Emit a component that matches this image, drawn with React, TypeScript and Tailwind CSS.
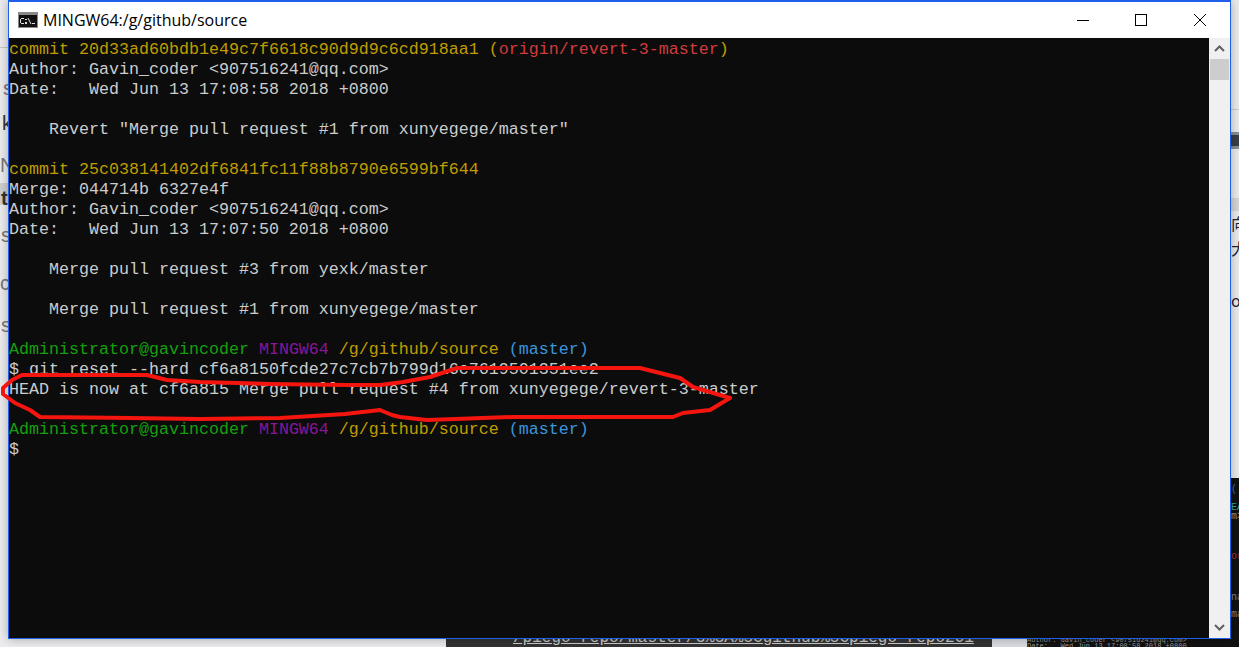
const Y = "text-[#c19c00]";
const G = "text-[#13a10e]";
const P = "text-[#881798]";
const B = "text-[#3a96dd]";
const R = "text-[#d23b3b]";

type Seg = [string, string?];

const prompt: Seg[] = [
  ["Administrator@gavincoder", G], [" "], ["MINGW64", P], [" "], ["/g/github/source", Y], [" "], ["(master)", B],
];

const LINES: Seg[][] = [
  [["commit 20d33ad60bdb1e49c7f6618c90d9d9c6cd918aa1 ", Y], ["(", Y], ["origin/revert-3-master", R], [")", Y]],
  [["Author: Gavin_coder <907516241@qq.com>"]],
  [["Date:   Wed Jun 13 17:08:58 2018 +0800"]],
  [],
  [['    Revert "Merge pull request #1 from xunyegege/master"']],
  [],
  [["commit 25c038141402df6841fc11f88b8790e6599bf644", Y]],
  [["Merge: 044714b 6327e4f"]],
  [["Author: Gavin_coder <907516241@qq.com>"]],
  [["Date:   Wed Jun 13 17:07:50 2018 +0800"]],
  [],
  [["    Merge pull request #3 from yexk/master"]],
  [],
  [["    Merge pull request #1 from xunyegege/master"]],
  [],
  prompt,
  [["$ git reset --hard cf6a8150fcde27c7cb7b799d16c7619501351ee2"]],
  [["HEAD is now at cf6a815 Merge pull request #4 from xunyegege/revert-3-master"]],
  [],
  prompt,
  [["$"]],
];

// letters of the page behind the window that stick out on either side
const LEFT_BITS = [
  { y: 76, x: 3, t: "s", c: "text-[#777]" },
  { y: 111, x: 2, t: "k", c: "text-[#333]" },
  { y: 153, x: 0, t: "N", c: "text-[#777]" },
  { y: 186, x: 1, t: "t", c: "text-[#333] font-bold" },
  { y: 223, x: 1, t: "s", c: "text-[#777]" },
  { y: 271, x: 0, t: "c", c: "text-[#777]" },
  { y: 313, x: 1, t: "s", c: "text-[#777]" },
];

const RIGHT_BITS = [
  { y: 213, t: "向" },
  { y: 238, t: "大" },
  { y: 290, t: "o" },
];

const DARK_BITS = [
  { y: 485, t: "(", c: "text-[#3a76a8]" },
  { y: 503, t: "EA", c: "text-[#3fa7a0]" },
  { y: 512, t: "m>", c: "text-[#999]" },
  { y: 552, t: "or", c: "text-[#a33]" },
  { y: 593, t: "na", c: "text-[#888]" },
  { y: 610, t: "ma", c: "text-[#888]" },
  { y: 627, t: "or", c: "text-[#a33]" },
];

function TermIcon() {
  return (
    <svg width="20" height="16" viewBox="0 0 20 16" className="shrink-0">
      <rect width="20" height="16" fill="#8a8a8a" />
      <rect x="1" y="3" width="18" height="12" fill="#111" />
      <rect x="3" y="6" width="3" height="1" fill="#ddd" />
      <rect x="2" y="7" width="1" height="4" fill="#ddd" />
      <rect x="3" y="11" width="3" height="1" fill="#ddd" />
      <rect x="7" y="7" width="2" height="1" fill="#ddd" />
      <rect x="7" y="10" width="2" height="2" fill="#ddd" />
      <path d="M10 6l3 6" stroke="#ddd" strokeWidth="1" />
      <rect x="14" y="11" width="3" height="1" fill="#ddd" />
    </svg>
  );
}

function Chevron({ down }: { down?: boolean }) {
  return (
    <svg width="11" height="7" viewBox="0 0 11 7">
      <path d={down ? "M1 1l4.5 4.5L10 1" : "M1 6l4.5-4.5L10 6"} fill="none" stroke="#606060" strokeWidth="2" />
    </svg>
  );
}

export default function App() {
  return (
    <div className="relative h-[647px] w-[1239px] overflow-hidden bg-[#ececee] font-['Liberation_Sans',sans-serif]">
      {/* page behind the terminal */}
      <div className="absolute left-0 top-0 h-[647px] w-2 overflow-hidden">
        <div className="absolute left-0 top-[47px] h-px w-2 bg-[#c8c8c8]" />
        <div className="absolute left-0 top-[183px] h-[22px] w-2 bg-[#d0d0d0]" />
        {LEFT_BITS.map((b) => (
          <div key={b.y} style={{ top: b.y, left: b.x }} className={`absolute text-[20px] leading-[24px] ${b.c}`}>{b.t}</div>
        ))}
      </div>
      <div className="absolute left-[1231px] top-[109px] h-px w-2 bg-[#ccc]" />
      <div className="absolute left-[1231px] top-[132px] flex h-[17px] w-2 items-center bg-[#8a8f94]">
        <div className="h-[11px] w-2 bg-[#3a3f48]" />
      </div>
      <div className="absolute left-[1231px] top-[198px] h-[13px] w-2 bg-[#d6d6d6]" />
      {RIGHT_BITS.map((b) => (
        <div key={b.y} style={{ top: b.y }} className="absolute left-[1231px] w-2 overflow-hidden whitespace-nowrap text-[16px] leading-[20px] text-[#223] font-['Noto_Sans_CJK_SC',sans-serif]">{b.t}</div>
      ))}
      <div className="absolute left-[1231px] top-[478px] h-[169px] w-2 overflow-hidden bg-[#111] font-['Liberation_Mono',monospace] text-[10px]">
        {DARK_BITS.map((b) => (
          <div key={b.y} style={{ top: b.y - 478 }} className={`absolute left-0 leading-[10px] ${b.c}`}>{b.t}</div>
        ))}
      </div>
      <div className="absolute left-[446px] top-[625px] h-[22px] w-[546px] overflow-hidden bg-[#333] pl-[67px]">
        <span className="whitespace-nowrap font-['Liberation_Mono',monospace] text-[16px] leading-[26px] text-[#ccc] underline">/piego_repo/master/G%3A%5Cgithub%5Cpiego_repo201</span>
      </div>
      <div className="absolute left-[992px] top-[625px] h-[22px] w-[35px] bg-[#dcdce4]" />
      <div className="absolute left-[1027px] top-[625px] h-[22px] w-[212px] overflow-hidden bg-[#111] pt-[12px] font-['Liberation_Mono',monospace] text-[7px] leading-[6px] text-[#999]">
        <div className="whitespace-pre">Author: Gavin_coder &lt;907516241@qq.com&gt;</div>
        <div className="whitespace-pre">Date:   Wed Jun 13 17:08:58 2018 +0800</div>
      </div>

      {/* terminal window */}
      <div className="absolute left-2 top-0 flex h-[639px] w-[1223px] flex-col border border-t-2 border-[#1f5fe8] bg-white shadow-[0_0_10px_rgba(0,0,0,0.3)]">
        <div className="flex h-[36px] shrink-0 items-center pl-[9px]">
          <TermIcon />
          <span className="ml-[5px] text-[16px] leading-[20px] text-black font-['Open_Sans',sans-serif]">MINGW64:/g/github/source</span>
          <div className="ml-auto flex items-center pr-[24px]">
            <div className="h-px w-3 bg-black" />
            <div className="ml-[46px] h-[12px] w-[12px] border border-black" />
            <svg width="12" height="12" viewBox="0 0 12 12" className="ml-[47px]">
              <path d="M0 0L12 12M12 0L0 12" stroke="#000" strokeWidth="1" />
            </svg>
          </div>
        </div>
        <div className="flex min-h-0 flex-1">
          <pre className="min-w-0 flex-1 overflow-hidden bg-[#0c0c0c] pt-[2px] font-['Liberation_Mono',monospace] text-[16.67px] leading-[20px] text-[#cccccc]">
            {LINES.map((segs, i) => (
              <div key={i} className="h-5">
                {segs.map(([t, c], j) => <span key={j} className={c}>{t}</span>)}
              </div>
            ))}
          </pre>
          <div className="flex w-[21px] shrink-0 flex-col items-center bg-[#f0f0f0]">
            <div className="flex h-[21px] items-center justify-center"><Chevron /></div>
            <div className="h-[21px] w-[19px] bg-[#cdcdcd]" />
            <div className="mt-auto flex h-[21px] items-center justify-center"><Chevron down /></div>
          </div>
        </div>
      </div>

      {/* red marker ring drawn on the screenshot */}
      <svg width="1239" height="647" className="pointer-events-none absolute left-0 top-0">
        <path
          d="M22 375 L12 380 L3 388 L3 394 L15 403 L30 410 L40 417 L130 418 L200 419 L280 418 L345 414 L380 410 L392 415 L400 417 L427 420 L513 417 L600 417 L673 417 L683 413 L710 410 L730 398 L693 387 L680 378 L640 368 L457 368 L430 377 L403 382 L380 385 L347 385 L270 384 L200 382 L167 380 L147 375 Z"
          fill="none"
          stroke="#f5150f"
          strokeWidth="4"
          strokeLinejoin="round"
        />
      </svg>
    </div>
  );
}
